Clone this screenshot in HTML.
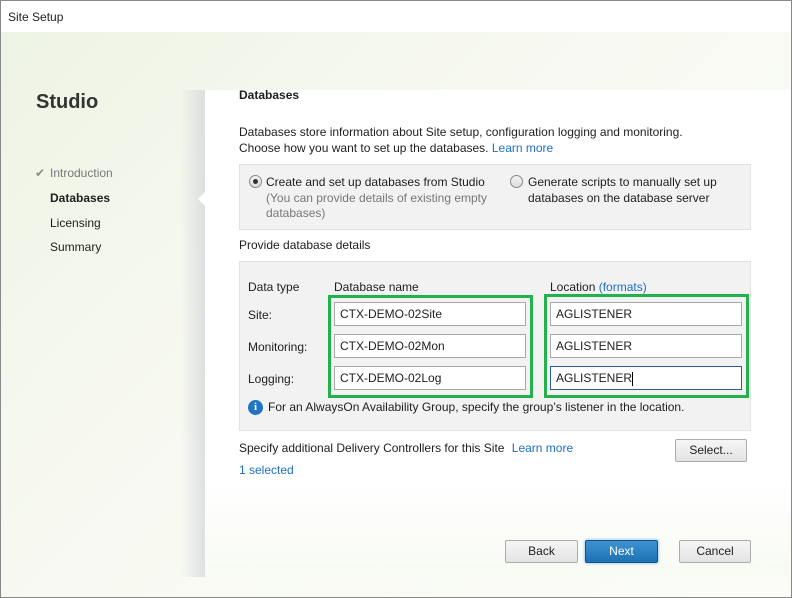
<!DOCTYPE html>
<html><head><style>
*{margin:0;padding:0;box-sizing:border-box}
body{width:792px;height:598px;overflow:hidden;font-family:"Liberation Sans",sans-serif;font-size:12px;color:#1e1e1e;position:relative;background:#fff}
.win{position:absolute;left:0;top:0;width:792px;height:598px;border:1px solid #888;background:linear-gradient(135deg,#edf3e3 0%,#f7f9f1 40%,#fbfcf8 100%)}
.title{position:absolute;left:0;top:0;width:790px;height:31px;background:#fff;}
.t{position:absolute;white-space:nowrap;line-height:14px}
.panel{position:absolute;left:204px;top:89px;width:586px;height:487px;background:linear-gradient(180deg,#fff 0%,#fff 80%,#f8faf3 100%)}
.shadow{position:absolute;left:179px;top:89px;width:25px;height:487px;background:linear-gradient(90deg,rgba(255,255,255,0),rgba(200,203,210,.55))}
.notch{position:absolute;left:197px;top:191px;width:0;height:0;border-top:7px solid transparent;border-bottom:7px solid transparent;border-right:7px solid #fff}
.box{position:absolute;background:#f2f2f2;border:1px solid #e2e2e2}
.in{position:absolute;height:24px;background:#fff;border:1px solid #a8a8a8;padding-left:5px;line-height:22px;font-size:12px}
.green{position:absolute;border:3px solid #22b14c}
.radio{position:absolute;width:13px;height:13px;border-radius:50%;border:1px solid #8a8a8a;background:linear-gradient(#f4f4f4,#dcdcdc)}
.btn{position:absolute;height:23px;border:1px solid #acacac;border-radius:2px;background:linear-gradient(#f6f6f6,#e3e3e3);text-align:center;line-height:21px}
.blue{color:#1a6fc9}
.gray{color:#777}
</style></head><body>
<div class="win">
<div class="title"><div class="t" style="left:7px;top:9px;font-size:12px">Site Setup</div></div>
<div class="t" style="left:35px;top:89px;font-size:20px;line-height:24px;color:#333;font-weight:bold">Studio</div>
<div class="t" style="left:34px;top:165px;color:#8a8a8a">✔</div>
<div class="t gray" style="left:49px;top:165px">Introduction</div>
<div class="t" style="left:49px;top:190px;font-weight:bold">Databases</div>
<div class="t" style="left:49px;top:215px">Licensing</div>
<div class="t" style="left:49px;top:239px">Summary</div>
<div class="shadow"></div>
<div class="panel"></div>
<div class="notch"></div>
<div class="t" style="left:238px;top:87px;font-weight:bold">Databases</div>
<div class="t" style="left:238px;top:124px">Databases store information about Site setup, configuration logging and monitoring.</div>
<div class="t" style="left:238px;top:140px">Choose how you want to set up the databases. <span class="blue">Learn more</span></div>
<div class="box" style="left:238px;top:163px;width:512px;height:66px"></div>
<div class="radio" style="left:248px;top:174px"><div style="position:absolute;left:3px;top:3px;width:5px;height:5px;border-radius:50%;background:#333"></div></div>
<div class="t" style="left:265px;top:174px">Create and set up databases from Studio</div>
<div class="t gray" style="left:265px;top:190px">(You can provide details of existing empty</div>
<div class="t gray" style="left:265px;top:205px">databases)</div>
<div class="radio" style="left:509px;top:174px"></div>
<div class="t" style="left:527px;top:174px">Generate scripts to manually set up</div>
<div class="t" style="left:527px;top:190px">databases on the database server</div>
<div class="t" style="left:238px;top:237px">Provide database details</div>
<div class="box" style="left:238px;top:260px;width:512px;height:170px"></div>
<div class="t" style="left:247px;top:279px">Data type</div>
<div class="t" style="left:333px;top:279px">Database name</div>
<div class="t" style="left:549px;top:279px">Location <span class="blue">(formats)</span></div>
<div class="t" style="left:247px;top:307px">Site:</div>
<div class="t" style="left:247px;top:339px">Monitoring:</div>
<div class="t" style="left:247px;top:371px">Logging:</div>
<div class="green" style="left:327px;top:294px;width:205px;height:103px"></div>
<div class="in" style="left:333px;top:301px;width:192px">CTX-DEMO-02Site</div>
<div class="in" style="left:333px;top:333px;width:192px">CTX-DEMO-02Mon</div>
<div class="in" style="left:333px;top:365px;width:192px">CTX-DEMO-02Log</div>
<div class="green" style="left:543px;top:293px;width:205px;height:104px"></div>
<div class="in" style="left:549px;top:301px;width:192px">AGLISTENER</div>
<div class="in" style="left:549px;top:333px;width:192px">AGLISTENER</div>
<div class="in" style="left:549px;top:365px;width:192px;border-color:#2a5a9a">AGLISTENER<span style="display:inline-block;width:1px;height:14px;background:#000;vertical-align:middle"></span></div>
<div style="position:absolute;left:247px;top:399px;width:15px;height:15px;border-radius:50%;background:#1f74c6;color:#fff;font-weight:bold;font-size:11px;text-align:center;line-height:15px;font-family:'Liberation Serif',serif">i</div>
<div class="t" style="left:267px;top:399px">For an AlwaysOn Availability Group, specify the group’s listener in the location.</div>
<div class="t" style="left:238px;top:440px">Specify additional Delivery Controllers for this Site <span class="blue" style="margin-left:4px">Learn more</span></div>
<div class="btn" style="left:674px;top:438px;width:72px">Select...</div>
<div class="t blue" style="left:238px;top:462px">1 selected</div>
<div class="btn" style="left:504px;top:539px;width:73px">Back</div>
<div class="btn" style="left:584px;top:539px;width:73px;background:linear-gradient(#3d93d1,#1d72b5);border-color:#1a4f80;color:#fff;box-shadow:0 0 3px #6fb4e8">Next</div>
<div class="btn" style="left:678px;top:539px;width:72px">Cancel</div>
</div>
</body></html>
